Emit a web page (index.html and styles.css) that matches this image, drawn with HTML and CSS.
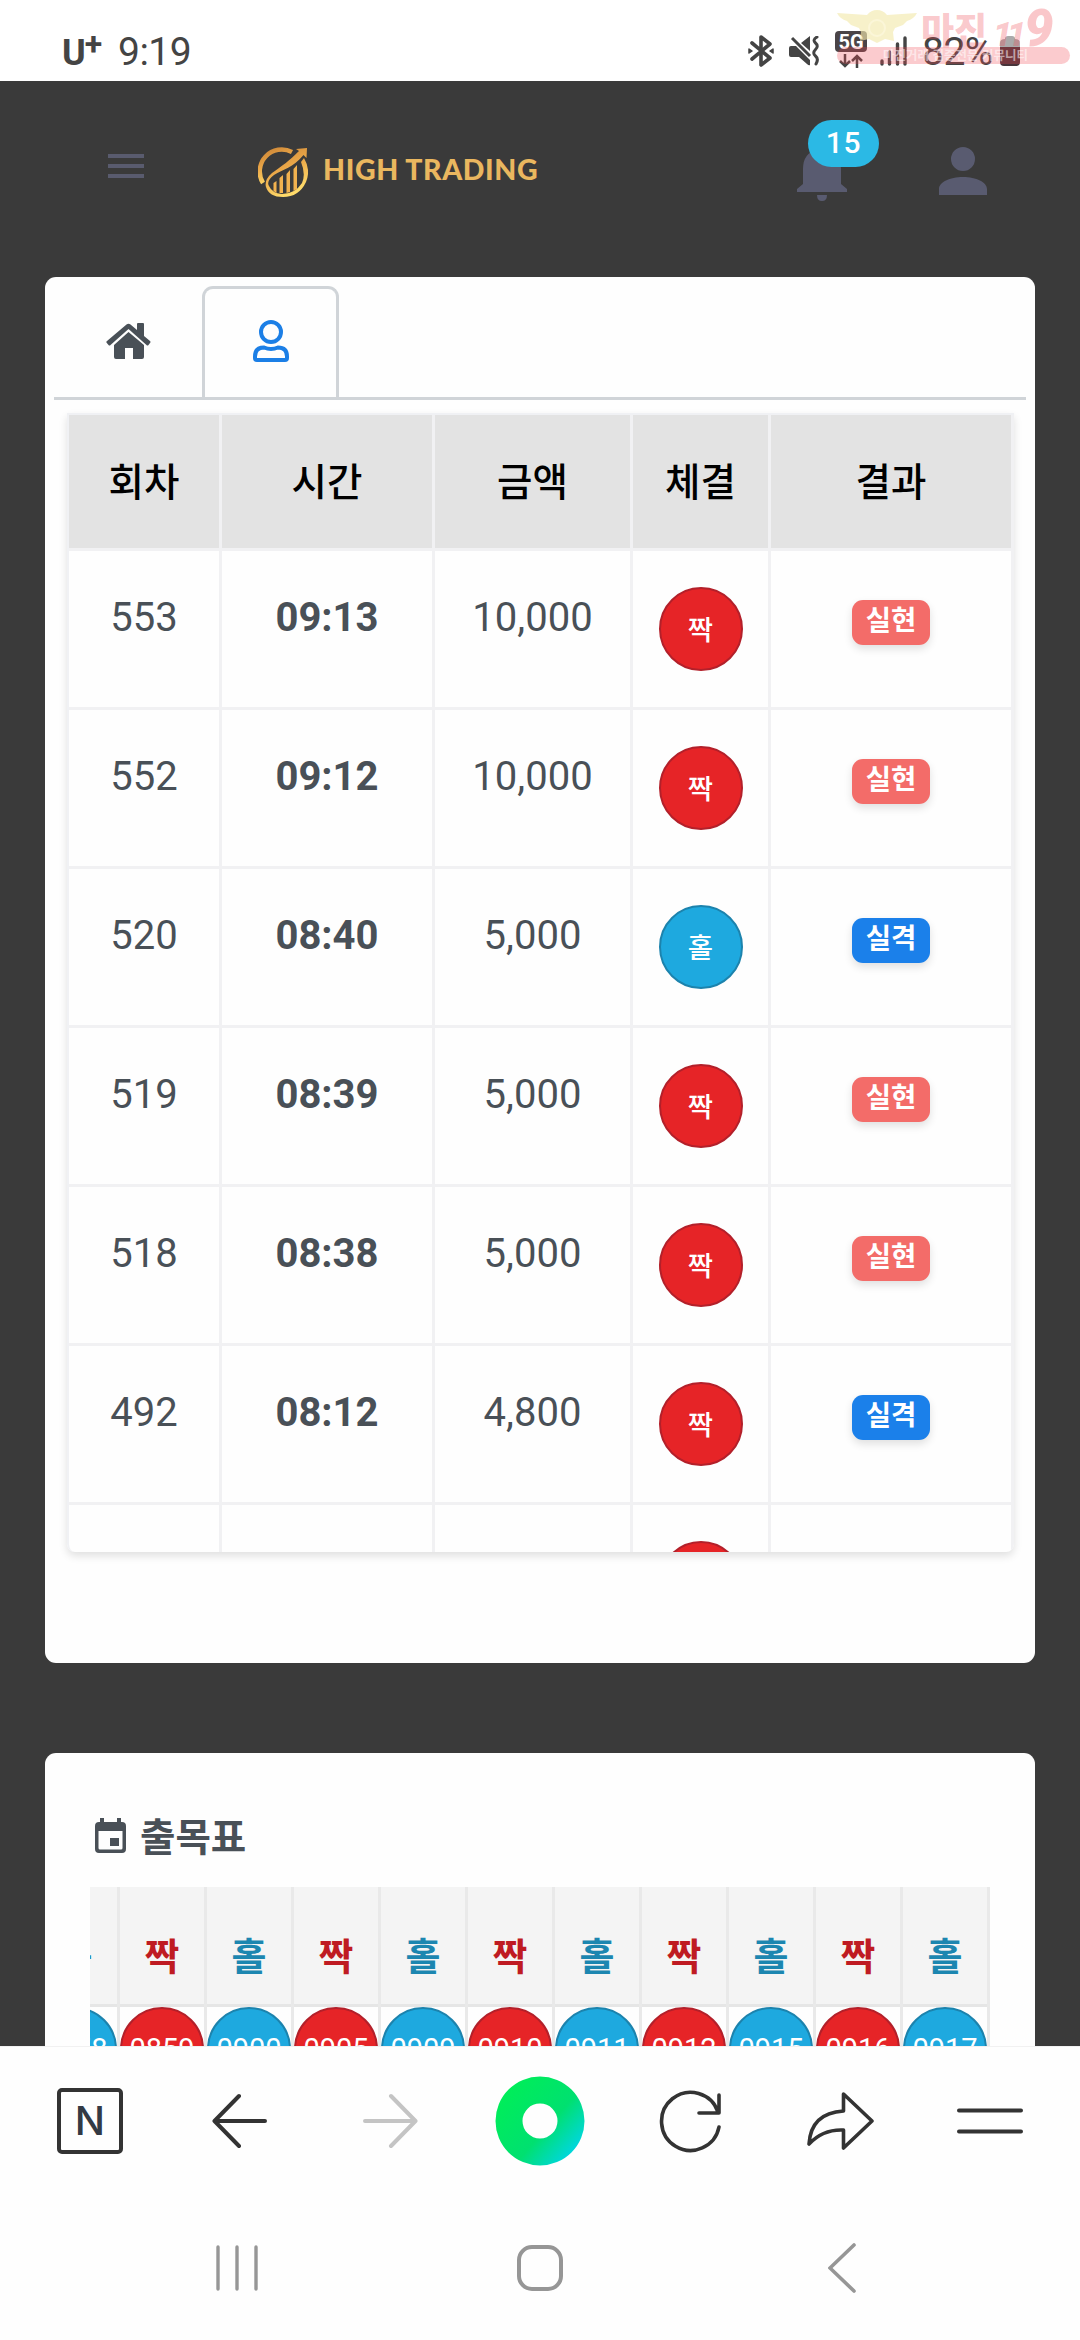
FILE: index.html
```html
<!DOCTYPE html>
<html lang="ko">
<head>
<meta charset="utf-8">
<title>High Trading</title>
<link rel="stylesheet" href="styles.css">
</head>
<body>
<header class="status">
  <span class="carrier">U<sup>+</sup></span>
  <span class="clock">9:19</span>
  <div class="status-icons">
    <svg class="ic-bt" width="28" height="32" viewBox="0 0 28 32" fill="none" stroke="#444" stroke-width="3.6" stroke-linejoin="round" stroke-linecap="round"><path d="M5 8 23 23 14 30V2l9 7L5 24"/><path d="M2 14l3 2-3 2zM26 14l-3 2 3 2z" stroke-width="1.5" fill="#444"/></svg>
    <svg class="ic-mute" width="31" height="30" viewBox="0 0 31 30"><path d="M0 12q0-2 2-2h5l14 14v5q-1 1-3-1l-8-7H2q-2 0-2-2zM12 7l9-7v15z" fill="#444"/><path d="M3 2l18 18" stroke="#444" stroke-width="3"/><path d="M28 1q-5 3-1.500 6t0 6.500 0 6.500.500 8" fill="none" stroke="#444" stroke-width="3" stroke-linecap="round"/></svg>
    <div class="net"><span class="net-label">5G</span>
      <svg width="24" height="14" viewBox="0 0 24 14" fill="none" stroke="#444" stroke-width="2.500"><path d="M6 0v12M1 7l5 5 5-5M18 14V2M13 7l5-5 5 5"/></svg></div>
    <svg class="ic-signal" width="27" height="30" viewBox="0 0 27 30" stroke="#444" stroke-width="3.400" stroke-linecap="round"><path d="M2 25v3M9.500 16v12M17.500 8v20M25 2v26"/></svg>
    <span class="percent">82%</span>
    <svg class="ic-batt" width="22" height="31" viewBox="0 0 22 31"><path d="M6 3q0-3 3-3h4q3 0 3 3 5 0 5 4v4H1V7q0-4 5-4z" fill="#aaa"/><path d="M1 11h20v15q0 4-4 4H5q-4 0-4-4z" fill="#47343a"/></svg>
  </div>
  <div class="watermark">
    <svg width="80" height="33" viewBox="0 0 80 33" fill="#f3e9ae"><path d="M0 3l30 2q4-5 10-5t10 5l30-2q-3 6-10 8l-4 4-8 3-2 4 1 9-9-2-8 4-8-4-9 2 1-9-2-4-8-3-4-4Q3 9 0 3z" opacity=".65"/><circle cx="40" cy="18" r="8" fill="none" stroke="#fbf6d8" stroke-width="2"/></svg>
    <b class="wm-name">마진</b><b class="wm-num"><small>11</small>9</b>
    <span class="wm-band">마진거래 검증전문 커뮤니티</span>
  </div>
</header>

<main class="page">
  <nav class="topbar">
    <div class="burger"><i></i><i></i><i></i></div>
    <div class="brand">
      <svg width="50" height="51" viewBox="0 0 50 51">
        <defs><linearGradient id="gold" x1="0" y1="0" x2="0.400" y2="1"><stop offset="0" stop-color="#c98235"/><stop offset=".5" stop-color="#eaa748"/><stop offset="1" stop-color="#ffdb6a"/></linearGradient></defs>
        <path d="M5 36A22 22 0 0 1 34 5" fill="none" stroke="url(#gold)" stroke-width="4.500"/>
        <path d="M49 1l-.5 10-3-3C35 21 25 22 16 28q-8 6-5 11 3 7 13 8 13 0 20-11 4-9-1-21l3-4q7 12 2 24-7 15-23 15Q11 50 8 40 6 33 14 26C24 19 31 14 41 4l-3-2z" fill="url(#gold)"/>
        <path d="M15.500 36l3-2v12l-3-2zM21.500 31l3.500-3v18h-3.500zM28.500 27l3.500-4v22l-3.500 1zM35.500 22l3.500-4v24l-3.500 2z" fill="#f2b24f"/>
      </svg>
      <span class="brand-name">HIGH TRADING</span>
    </div>
    <div class="bell">
      <svg width="50" height="54" viewBox="0 0 50 54" fill="#595b70"><path d="M6 22Q6 6 20 3q0-3 5-3t5 3q14 3 14 19v15l6 5v3H0v-3l6-5zM20 48h10q0 6-5 6t-5-6z"/></svg>
      <span class="count">15</span>
    </div>
    <svg class="account" width="48" height="48" viewBox="4 4 16 16" fill="#595b70"><path d="M12 4a4 4 0 0 1 4 4 4 4 0 0 1-4 4 4 4 0 0 1-4-4 4 4 0 0 1 4-4m0 10c4.420 0 8 1.790 8 4v2H4v-2c0-2.210 3.580-4 8-4z"/></svg>
  </nav>

  <section class="card orders">
    <div class="tabs">
      <div class="tab"><svg width="45" height="36" viewBox="0 0 45 36" fill="#495057"><path d="M22.500 9 38 22v12q0 2-2 2h-9V25h-8v11h-9q-2 0-2-2V22z"/><path d="M1 18 20.500 1.500q2-1.500 4 0L31 7V1q0-1 1-1h5q1 0 1 1v12l6 5q1 1 0 2l-1.500 2q-1 1-2 0L22.500 6 4.500 22q-1 1-2 0L.800 20q-1-1 .200-2z"/></svg></div>
      <div class="tab active"><svg width="36" height="42" viewBox="0 0 36 42" fill="none" stroke="#1c7fe6" stroke-width="4"><circle cx="18" cy="12" r="10"/><path d="M11 27.500q7 3 14 0 9 0 9 9V38q0 2-2 2H4q-2 0-2-2v-1.500q0-9 9-9z"/></svg></div>
    </div>
    <div class="table-wrap">
      <table>
        <colgroup><col class="c1"><col class="c2"><col class="c3"><col class="c4"><col class="c5"></colgroup>
        <thead><tr><th>회차</th><th>시간</th><th>금액</th><th>체결</th><th>결과</th></tr></thead>
        <tbody>
          <tr><td>553</td><td class="time">09:13</td><td>10,000</td><td class="pick"><span class="ball red">짝</span></td><td class="result"><span class="tag win">실현</span></td></tr>
          <tr><td>552</td><td class="time">09:12</td><td>10,000</td><td class="pick"><span class="ball red">짝</span></td><td class="result"><span class="tag win">실현</span></td></tr>
          <tr><td>520</td><td class="time">08:40</td><td>5,000</td><td class="pick"><span class="ball blue">홀</span></td><td class="result"><span class="tag lose">실격</span></td></tr>
          <tr><td>519</td><td class="time">08:39</td><td>5,000</td><td class="pick"><span class="ball red">짝</span></td><td class="result"><span class="tag win">실현</span></td></tr>
          <tr><td>518</td><td class="time">08:38</td><td>5,000</td><td class="pick"><span class="ball red">짝</span></td><td class="result"><span class="tag win">실현</span></td></tr>
          <tr><td>492</td><td class="time">08:12</td><td>4,800</td><td class="pick"><span class="ball red">짝</span></td><td class="result"><span class="tag lose">실격</span></td></tr>
          <tr><td></td><td></td><td></td><td class="pick"><span class="ball red"></span></td><td></td></tr>
        </tbody>
      </table>
    </div>
  </section>

  <section class="card history">
    <h2><svg width="31" height="35" viewBox="0 0 31 35" fill="#495057"><path fill-rule="evenodd" d="M5 0h4v4h13V0h4v4h1q4 0 4 4v23q0 4-4 4H4q-4 0-4-4V8q0-4 4-4h1zM3.500 13v17q0 1.500 1.500 1.500h21q1.500 0 1.500-1.500V13z"/><path d="M15 20h9v8h-9z"/></svg>출목표</h2>
    <div class="board">
      <div class="col"><b class="odd">홀</b><span class="ball blue">0858</span></div>
      <div class="col"><b class="even">짝</b><span class="ball red">0859</span></div>
      <div class="col"><b class="odd">홀</b><span class="ball blue">0900</span></div>
      <div class="col"><b class="even">짝</b><span class="ball red">0905</span></div>
      <div class="col"><b class="odd">홀</b><span class="ball blue">0909</span></div>
      <div class="col"><b class="even">짝</b><span class="ball red">0910</span></div>
      <div class="col"><b class="odd">홀</b><span class="ball blue">0911</span></div>
      <div class="col"><b class="even">짝</b><span class="ball red">0912</span></div>
      <div class="col"><b class="odd">홀</b><span class="ball blue">0915</span></div>
      <div class="col"><b class="even">짝</b><span class="ball red">0916</span></div>
      <div class="col"><b class="odd">홀</b><span class="ball blue">0917</span></div>
    </div>
  </section>
</main>

<footer class="bottom">
  <div class="browser-bar">
    <span class="naver">N</span>
    <svg width="56" height="56" viewBox="0 0 56 56" fill="none" stroke="#333" stroke-width="4" stroke-linecap="round" stroke-linejoin="round"><path d="M27 3 2.500 28 27 53M3 28h50"/></svg>
    <svg width="56" height="56" viewBox="0 0 56 56" fill="none" stroke="#c4c4c4" stroke-width="4" stroke-linecap="round" stroke-linejoin="round"><path d="M29 3l24.500 25L29 53M53 28H3"/></svg>
    <svg width="90" height="90" viewBox="0 0 90 90"><defs><linearGradient id="dot" x1=".1" y1=".15" x2=".9" y2=".85"><stop offset="0" stop-color="#00ee58"/><stop offset=".6" stop-color="#00e070"/><stop offset="1" stop-color="#00d6e4"/></linearGradient></defs><path fill-rule="evenodd" fill="url(#dot)" d="M45 .5a44.500 44.500 0 1 1 0 89 44.500 44.500 0 0 1 0-89zm0 27a17.500 17.500 0 1 0 0 35 17.500 17.500 0 0 0 0-35z"/></svg>
    <svg width="64" height="64" viewBox="0 0 64 64" fill="none" stroke="#333" stroke-width="3.600" stroke-linecap="round" stroke-linejoin="round"><path d="M61 38A29 29 0 1 1 60 23M61 6v18H41"/></svg>
    <svg width="68" height="60" viewBox="0 0 68 60" fill="none" stroke="#333" stroke-width="3.600" stroke-linejoin="round"><path d="M37.500 3 66 30 37.500 57V39Q17 38 3 53 5 22 37.500 20z"/></svg>
    <svg width="66" height="26" viewBox="0 0 66 26" stroke="#333" stroke-width="4" stroke-linecap="round"><path d="M2 2.500h62M2 23.500h62"/></svg>
  </div>
  <div class="system-bar">
    <svg width="42" height="46" viewBox="0 0 42 46" stroke="#969696" stroke-width="3.400" stroke-linecap="round"><path d="M2 2v42M21 2v42M40 2v42"/></svg>
    <svg width="46" height="46" viewBox="0 0 46 46" fill="none" stroke="#969696" stroke-width="4"><rect x="2" y="2" width="42" height="42" rx="13"/></svg>
    <svg width="28" height="50" viewBox="0 0 28 50" fill="none" stroke="#969696" stroke-width="3.600" stroke-linecap="round"><path d="M26 2 2 25l24 23"/></svg>
  </div>
</footer>
</body>
</html>
```
FILE: styles.css
```css
* { box-sizing: border-box; }
body {
  margin: 0;
  width: 1080px;
  height: 2340px;
  overflow: hidden;
  display: flex;
  flex-direction: column;
  background: #fefefe;
  color: #495057;
  font-family: Roboto, "Noto Sans CJK KR", sans-serif;
}
svg { display: block; flex: none; }

/* phone status bar */
.status {
  position: relative;
  height: 81px;
  flex: none;
  display: flex;
  padding: 0 59px 0 62px;
  color: #444;
  background: #fff;
}
.carrier {
  width: 56px;
  padding-top: 33px;
  font: 700 36px/40px Roboto, sans-serif;
  white-space: nowrap;
}
.carrier sup {
  font-size: 32px;
  line-height: 0;
  vertical-align: 10px;
  margin-left: -1px;
}
.clock, .percent {
  padding-top: 29px;
  font-size: 39px;
  line-height: 46px;
  letter-spacing: -0.5px;
}
.status-icons {
  display: flex;
  align-items: flex-start;
  margin-left: auto;
}
.ic-bt { margin: 35px 14px 0 0; }
.ic-mute { margin: 36px 15px 0 0; }
.net {
  width: 32px;
  margin: 31px 13px 0 0;
  display: flex;
  flex-direction: column;
  align-items: center;
  gap: 2px;
}
.net-label {
  width: 32px;
  height: 21px;
  border-radius: 4px;
  background: #4a4447;
  color: #fff;
  font: 700 20px/22px Roboto, sans-serif;
  text-align: center;
}
.ic-signal { margin: 36px 15px 0 0; }
.percent { width: 77px; }
.ic-batt { margin-top: 36px; }
.watermark {
  position: absolute;
  left: 837px;
  top: 10px;
  width: 233px;
  height: 54px;
  display: grid;
  grid-template-columns: 84px 72px 77px;
  grid-template-rows: 37px 17px;
  color: rgba(240, 70, 80, 0.3);
}
.wm-name { font: 900 36px/36px "Noto Sans CJK KR", sans-serif; white-space: nowrap; }
.wm-num { font: italic 900 52px/38px Roboto, sans-serif; letter-spacing: -1px; white-space: nowrap; }
.wm-num small { font-size: 34px; letter-spacing: -5px; margin-right: 3px; }
.wm-band {
  grid-column: 1 / 4;
  border-radius: 9px;
  padding-left: 46px;
  background: rgba(240, 70, 80, 0.28);
  color: rgba(255, 255, 255, 0.55);
  font: 700 12.5px/16px "Noto Sans CJK KR", sans-serif;
  white-space: nowrap;
}

/* site */
.page {
  height: 1965px;
  flex: none;
  overflow: hidden;
  background: #3a3a3a;
}
.topbar {
  height: 196px;
  display: flex;
  align-items: flex-start;
  padding: 66px 93px 0 108px;
}
.burger {
  width: 36px;
  margin-top: 7px;
  display: grid;
  gap: 6px;
}
.burger i { height: 4px; background: #595b6e; }
.brand {
  display: flex;
  align-items: flex-start;
  gap: 15px;
  margin-left: 114px;
}
.brand-name {
  padding-top: 5px;
  color: #eab75f;
  font: 900 28.5px/34px Lato, sans-serif;
  letter-spacing: 0.6px;
  white-space: nowrap;
}
.bell { position: relative; margin-left: auto; }
.count {
  position: absolute;
  left: 11px;
  top: -27px;
  width: 71px;
  height: 47px;
  border-radius: 24px;
  background: #2bb9e5;
  color: #fff;
  font-size: 30px;
  font-weight: 500;
  line-height: 45px;
  letter-spacing: 0.6px;
  text-align: center;
}
.account { margin-left: 92px; }

.card {
  width: 990px;
  margin: 0 auto;
  border-radius: 11px;
  background: #fefefe;
}
.orders { height: 1386px; padding: 9px; }
.tabs {
  height: 114px;
  display: flex;
  border-bottom: 3px solid #d0d4d8;
}
.tab {
  width: 137px;
  height: 111px;
  display: flex;
  align-items: center;
  justify-content: center;
  padding-bottom: 1px;
}
.tab:first-child { width: 148px; }
.tab.active {
  border: 3px solid #d0d4d8;
  border-bottom: 0;
  border-radius: 11px 11px 0 0;
  padding-bottom: 4px;
}
.table-wrap {
  width: 947px;
  height: 1139px;
  margin: 13px 0 0 13px;
  overflow: hidden;
  border: solid #f0f1f4;
  border-width: 2px 0 0 2px;
  border-radius: 0 0 8px 8px;
  box-shadow: 0 4px 8px rgba(0, 0, 0, 0.12);
}
table { width: 945px; table-layout: fixed; border-collapse: separate; border-spacing: 0; }
.c1 { width: 153px; }
.c2 { width: 213px; }
.c3 { width: 198px; }
.c4 { width: 138px; }
.c5 { width: 243px; }
th, td {
  padding: 0;
  border: solid #f1f1f3;
  border-width: 0 3px 3px 0;
  text-align: center;
}
th {
  height: 136px;
  padding: 0 0 5px;
  background: #e3e3e3;
  color: #000;
  font-size: 38.5px;
  font-weight: 500;
}
td {
  height: 159px;
  padding-top: 43px;
  vertical-align: top;
  font-size: 40px;
  line-height: 48px;
}
.time { font-weight: 700; }
.pick { padding-top: 36px; }
.result { padding-top: 49px; }
.ball {
  display: flex;
  align-items: center;
  justify-content: center;
  width: 84px;
  height: 84px;
  margin: 0 auto;
  border: 2px solid;
  border-radius: 50%;
  font-size: 27.5px;
}
.pick .ball { padding-top: 3px; font-weight: 500; }
.red { background: #e62427; border-color: #b3202a; }
.blue { background: #1ea9df; border-color: #1c83ad; }
.ball.red, .ball.blue { color: #fff; }
.col .ball { font-size: 29px; }
.tag {
  display: block;
  width: 78px;
  height: 45px;
  margin: 0 auto;
  border-radius: 11px;
  box-shadow: 0 4px 8px rgba(0, 0, 0, 0.12);
  color: #fff;
  font-size: 27.5px;
  font-weight: 700;
  line-height: 42px;
}
.win { background: #f36c69; }
.lose { background: #1b80ea; }

.history { height: 600px; margin-top: 90px; padding: 53px 45px 0; }
h2 {
  display: flex;
  align-items: center;
  gap: 14px;
  height: 63px;
  margin: 0 0 18px 5px;
  font-size: 38.5px;
  font-weight: 700;
  line-height: 54px;
}
h2 svg { margin-top: -4px; }
.board {
  height: 260px;
  display: flex;
  justify-content: flex-end;
  overflow: hidden;
}
.col {
  width: 87px;
  flex: none;
  border-right: 3px solid #e9e9e9;
}
.col b {
  display: block;
  height: 120px;
  padding-top: 41px;
  border-bottom: 3px solid #e6e6e6;
  background: #f4f4f4;
  font-size: 38px;
  line-height: 58px;
  text-align: center;
}
.even { color: #bf1b22; }
.odd { color: #1c86b0; }

/* browser and system navigation */
.bottom { flex: 1; background: #fefefe; border-top: 1px solid #f1f1f1; }
.browser-bar {
  height: 148px;
  display: grid;
  grid-template-columns: repeat(7, 150px);
  place-items: center;
  padding: 0 15px;
}
.naver {
  width: 66px;
  height: 66px;
  border: 4px solid #333;
  border-radius: 5px;
  color: #333a44;
  font: 500 40px/58px Inter, sans-serif;
  text-align: center;
}
.system-bar {
  height: 145px;
  display: grid;
  grid-template-columns: repeat(3, 302.5px);
  place-items: center;
  padding-left: 86px;
}
```
